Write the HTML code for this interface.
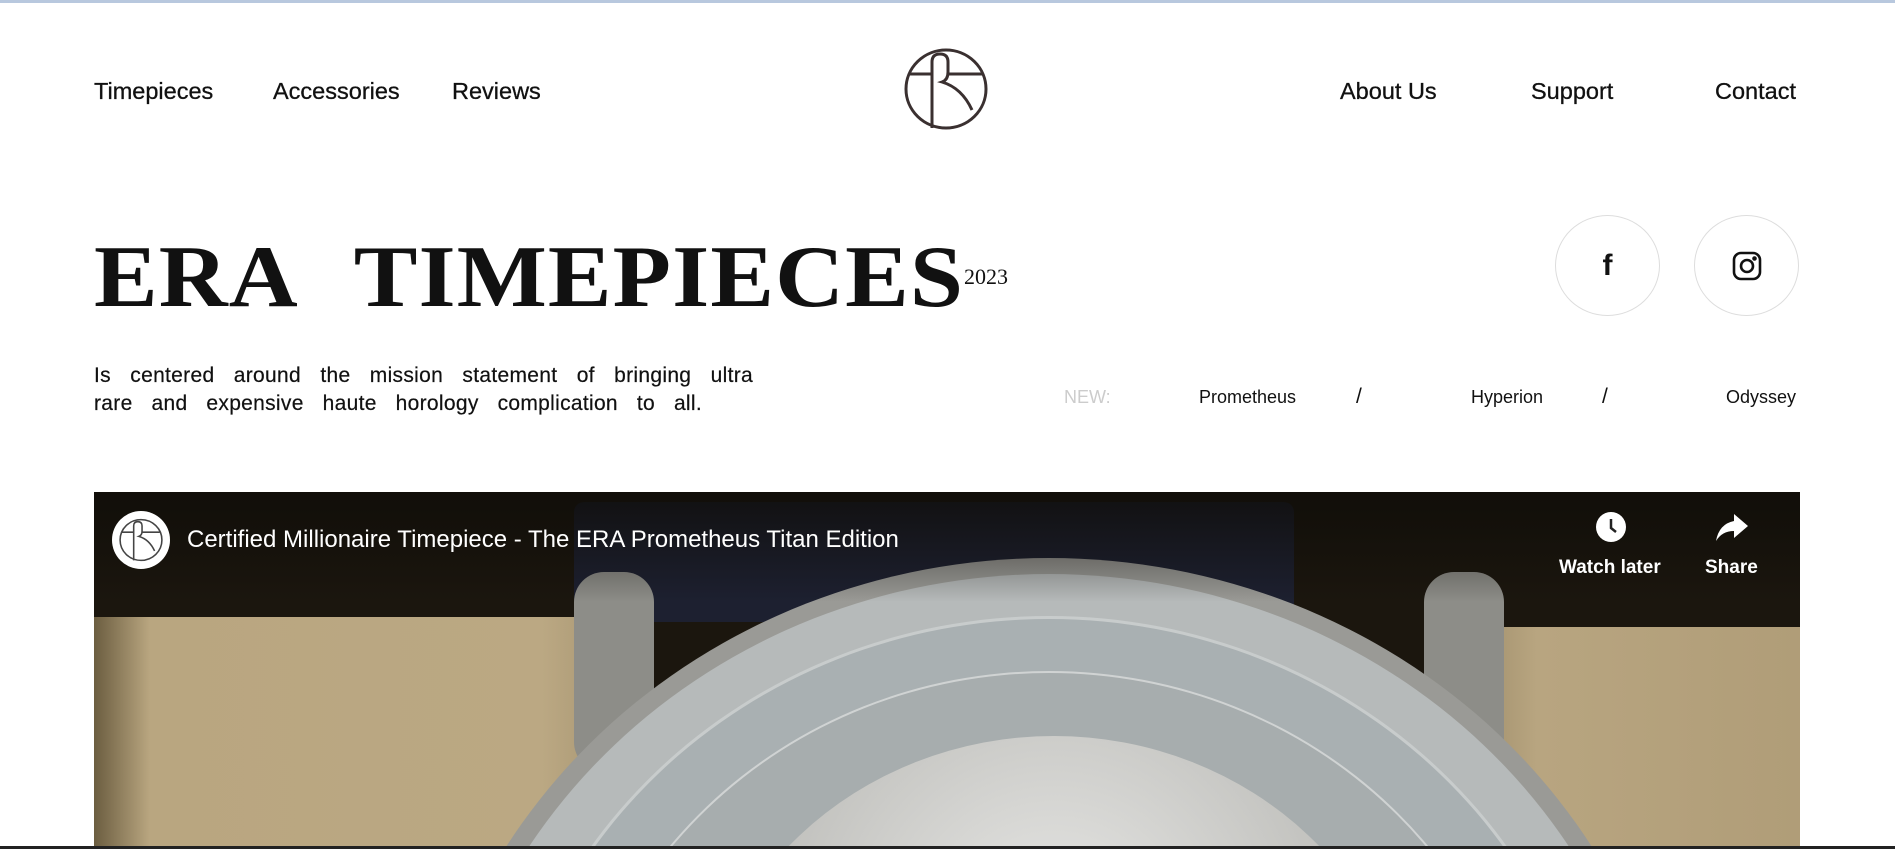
<!DOCTYPE html>
<html><head><meta charset="utf-8"><style>
*{margin:0;padding:0;box-sizing:border-box}
html,body{width:1895px;height:849px;overflow:hidden}
body{background:#fff;font-family:"Liberation Sans",sans-serif;color:#111;position:relative}
.top{position:absolute;left:0;top:0;width:1895px;height:3px;background:#b8c8de}
.nav{position:absolute;top:78px;font-size:23.5px;color:#111;-webkit-text-stroke:.3px #111}
.title{position:absolute;left:94px;top:234px;font-family:"Liberation Serif",serif;font-weight:bold;font-size:88px;letter-spacing:1px;word-spacing:34px;line-height:1;transform:scaleX(1.085);transform-origin:left;white-space:nowrap}
.yr{position:absolute;left:964px;top:264px;font-family:"Liberation Serif",serif;font-size:22px}
.circ{position:absolute;width:105px;height:101px;border:1px solid #ddd;border-radius:50%;top:215px;display:flex;align-items:center;justify-content:center}
.pl{position:absolute;left:94px;font-size:21px;line-height:28px;text-align:justify;text-align-last:justify;letter-spacing:.3px;-webkit-text-stroke:.2px #111;white-space:nowrap}
.new{position:absolute;top:387px;font-size:18px}
.video{position:absolute;left:94px;top:492px;width:1706px;height:357px;overflow:hidden;background:#1b160e}
</style></head><body>
<div class="top"></div>
<div class="nav" style="left:94px">Timepieces</div>
<div class="nav" style="left:273px">Accessories</div>
<div class="nav" style="left:452px">Reviews</div>
<div class="nav" style="left:1340px">About Us</div>
<div class="nav" style="left:1531px">Support</div>
<div class="nav" style="left:1715px">Contact</div>
<svg style="position:absolute;left:902px;top:46px" width="88" height="86" viewBox="0 0 88 86" fill="none" stroke="#3a3030" stroke-width="3">
<ellipse cx="44" cy="43" rx="40" ry="39"/>
<path d="M7 28 H30 M30 82 V16 Q30 8 38 8 Q46 8 46 16 V26 Q46 34 40 36 Q60 42 70 64 M46 28 H80"/>
</svg>
<div class="title">ERA TIMEPIECES</div>
<div class="yr">2023</div>
<div class="circ" style="left:1555px"><span style="font-family:'Liberation Sans';font-weight:bold;font-size:30px">f</span></div>
<div class="circ" style="left:1694px"><svg width="30" height="30" viewBox="0 0 30 30" fill="none" stroke="#111" stroke-width="2.6"><rect x="2" y="2" width="26" height="26" rx="7"/><circle cx="15" cy="15" r="6"/><circle cx="22.5" cy="7.5" r="1" fill="#111"/></svg></div>
<div class="pl" style="top:362px;width:659px">Is centered around the mission statement of bringing ultra</div>
<div class="pl" style="top:390px;width:608px">rare and expensive haute horology complication to all.</div>
<div class="new" style="left:1064px;color:#ccc">NEW:</div>
<div class="new" style="left:1199px">Prometheus</div>
<div class="new" style="left:1356px;font-size:21px;top:385px">/</div>
<div class="new" style="left:1471px">Hyperion</div>
<div class="new" style="left:1602px;font-size:21px;top:385px">/</div>
<div class="new" style="left:1726px">Odyssey</div>
<div class="video">
<div style="position:absolute;left:0;top:125px;width:560px;height:232px;background:linear-gradient(90deg,#6b5d40,#b9a680 10%,#bba883 80%,#9d8c68)"></div>
<div style="position:absolute;left:1330px;top:135px;width:376px;height:222px;background:linear-gradient(90deg,#8d7d5c,#b8a580 30%,#b09d78)"></div>
<div style="position:absolute;left:480px;top:10px;width:720px;height:120px;background:#1d2030;border-radius:10px"></div>
<div style="position:absolute;left:480px;top:80px;width:80px;height:200px;background:#8d8d88;border-radius:30px"></div>
<div style="position:absolute;left:1330px;top:80px;width:80px;height:200px;background:#8d8d88;border-radius:30px"></div>
<div style="position:absolute;left:320px;top:66px;width:1270px;height:1200px;border-radius:50%;background:#9a9a96"></div>
<div style="position:absolute;left:340px;top:82px;width:1230px;height:1170px;border-radius:50%;background:#b6baba"></div>
<div style="position:absolute;left:400px;top:124px;width:1110px;height:1060px;border-radius:50%;background:#a9b0b2;border:3px solid #c8cccc"></div>
<div style="position:absolute;left:470px;top:179px;width:970px;height:930px;border-radius:50%;background:#a7adae;border:2px solid #d0d3d3"></div>
<div style="position:absolute;left:600px;top:244px;width:720px;height:680px;border-radius:50%;background:radial-gradient(circle at 50% 30%,#e8e8e6,#b8b8b4 60%,#9a9a96)"></div>
<div style="position:absolute;left:0;top:0;width:100%;height:110px;background:linear-gradient(#0e0c08cc,#0e0c0800)"></div>
<div style="position:absolute;left:18px;top:19px;width:58px;height:58px;border-radius:50%;background:#fff;display:flex;align-items:center;justify-content:center"><svg width="46" height="46" viewBox="0 0 88 86" fill="none" stroke="#444" stroke-width="3"><ellipse cx="44" cy="43" rx="40" ry="39"/><path d="M7 28 H30 M30 82 V16 Q30 8 38 8 Q46 8 46 16 V26 Q46 34 40 36 Q60 42 70 64 M46 28 H80"/></svg></div>
<div style="position:absolute;left:93px;top:34px;color:#fff;font-size:24px">Certified Millionaire Timepiece - The ERA Prometheus Titan Edition</div>
<svg style="position:absolute;left:1502px;top:20px" width="30" height="30" viewBox="0 0 30 30"><circle cx="15" cy="15" r="15" fill="#fff"/><path d="M15 7 V16 L20 20" stroke="#222" stroke-width="2.5" fill="none"/></svg>
<div style="position:absolute;left:1465px;top:65px;color:#fff;font-size:19px;font-weight:bold">Watch later</div>
<svg style="position:absolute;left:1622px;top:22px" width="32" height="28" viewBox="0 0 32 28"><path d="M18 0 L32 12 L18 24 V17 Q6 17 0 27 Q3 10 18 7 Z" fill="#fff"/></svg>
<div style="position:absolute;left:1611px;top:65px;color:#fff;font-size:19px;font-weight:bold">Share</div>
</div>
<div style="position:absolute;left:0;top:846px;width:1895px;height:3px;background:#222"></div>
</body></html>
